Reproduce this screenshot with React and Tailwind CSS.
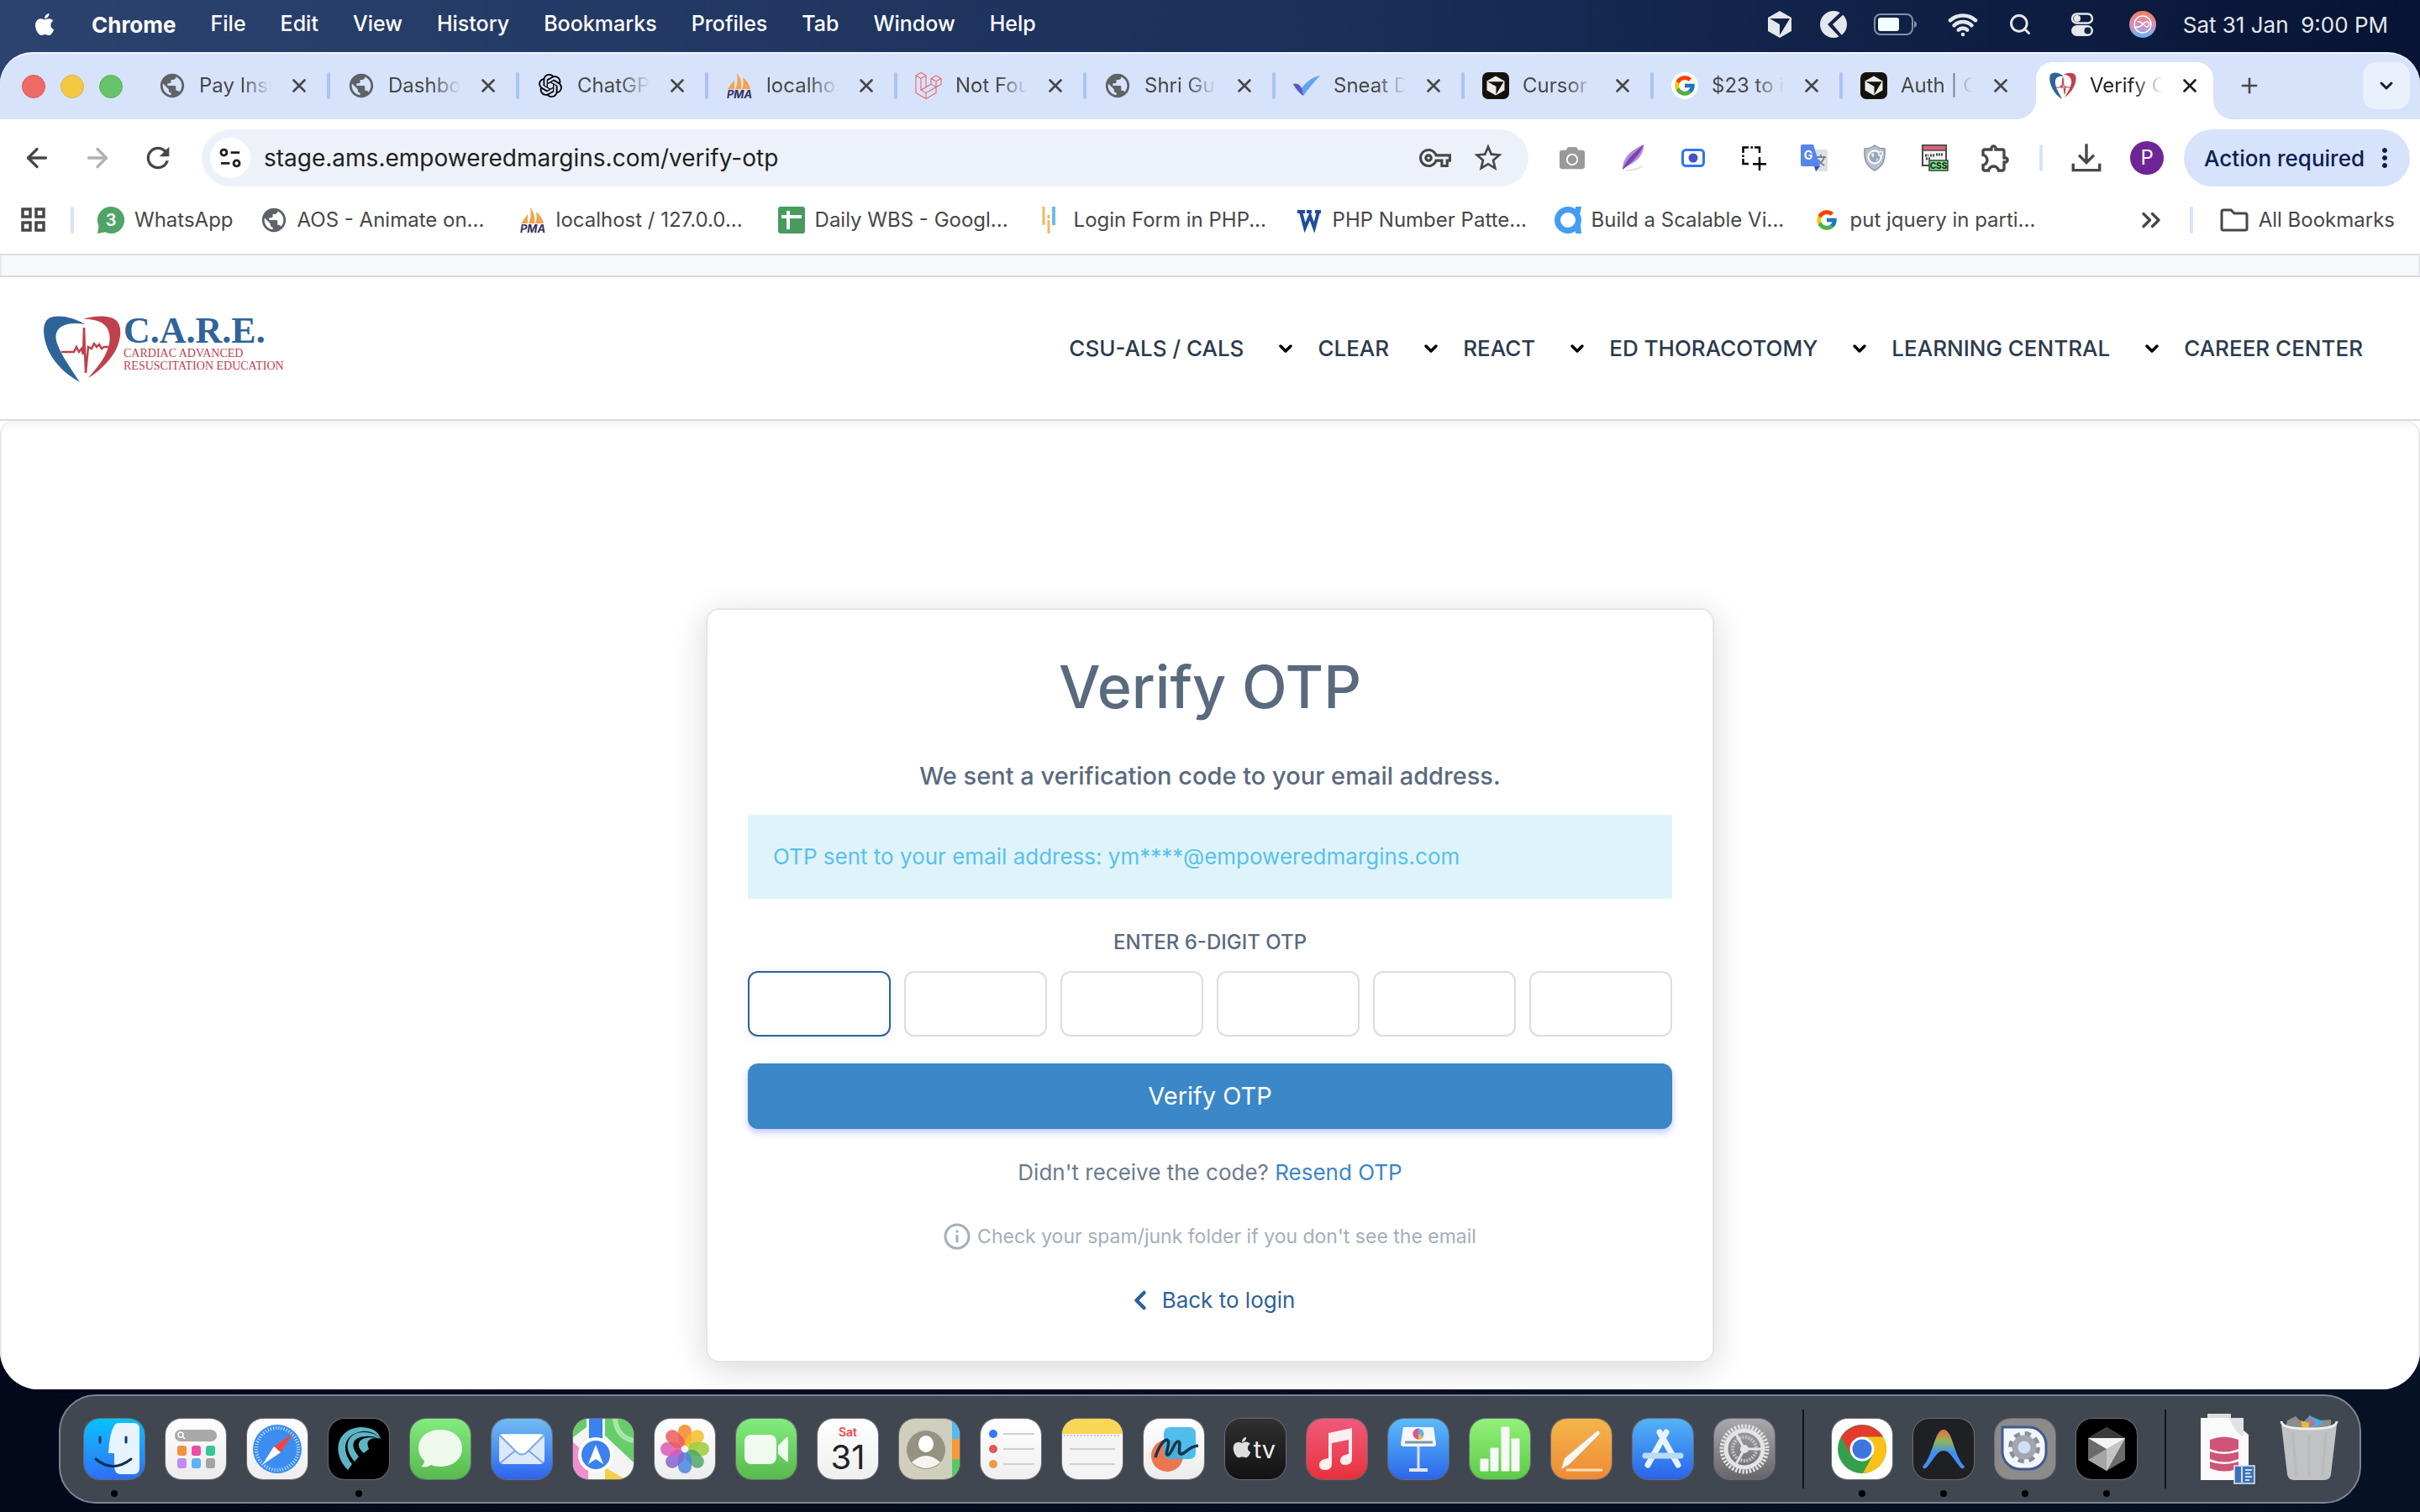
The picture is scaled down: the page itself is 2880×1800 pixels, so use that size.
import React, { useState } from 'react';
import { Plus, X, ChevronDown, ChevronLeft, ChevronsRight, ArrowLeft, ArrowRight, Wifi, Search } from 'lucide-react';
import { FaApple, FaCamera } from 'react-icons/fa';
import { FcGoogle } from 'react-icons/fc';
import { SiOpenai, SiLaravel } from 'react-icons/si';
import { MdPublic, MdOutlineVpnKey, MdStarBorder, MdRefresh, MdOutlineExtension, MdMoreVert } from 'react-icons/md';

/* ---------- small brand marks ---------- */

const Globe = () => <MdPublic className="size-[34px] shrink-0 text-[#5f6368]" />;

const Pma = () => (
    <svg viewBox="0 0 32 32" className="size-8">
        <path d="M2 20 10 9v11zM11 20C14 14 14 8 13 1c5 6 6 13 5 19zM19 20c2-5 2-9 1-14 5 4 8 9 9 14z" fill="#f3a34b" />
        <text x="16" y="31" textAnchor="middle" fontSize="13" fontWeight="700" fontStyle="italic" fontFamily="Inter, sans-serif" fill="#33305e">PMA</text>
    </svg>
);

const Sneat = () => (
    <svg viewBox="0 0 32 32" className="size-8">
        <path d="M0 14c5-1 8 1 10 5C15 12 22 6 32 4 24 12 18 20 12 28 8 25 3 20 0 14z" fill="#62a0f2" />
        <path d="M0 14c5-1 8 1 10 5l2 9C8 25 3 20 0 14z" fill="#5a55c8" />
    </svg>
);

const Cube = ({ box = '#14120b', face = '#edecec', className = 'size-8' }) => (
    <svg viewBox="0 0 32 32" className={className}>
        <rect width="32" height="32" rx="7" fill={box} />
        <path d="M16 4.500 26.500 10.500V21.500L16 27.500 5.500 21.500V10.500z" fill={face} />
        <path d="M6.500 11.300H25.500L16.500 26.500V17z" fill={box} />
    </svg>
);

const GoogleDot = () => (
    <span className="flex size-8 items-center justify-center rounded-full bg-white"><FcGoogle className="size-7" /></span>
);

const Heart = ({ className }) => (
    <svg viewBox="0 0 92 80" className={className}>
        <path d="M49 11C34 2 16-1 6 4-3 10-1 29 7 45c8 15 20 26 36 35C34 66 22 50 16 34 10 17 22 7 49 11z" fill="#2f6499" />
        <path d="M47 5C60 0 80 0 87 7c7 8 5 24-3 38-8 12-18 22-31 30 10-12 20-23 24-37C82 20 76 4 47 5z" fill="#c0414e" />
        <path d="M21 44h15l3-6 3 6 3-4 2 7 1-32 2 54 3-31 4 2 3-6 3 4 3-3 3 5 3-2h5" fill="none" stroke="#c0414e" strokeWidth="2.500" />
    </svg>
);

/* browser tab version: taller than the header logo */
const HeartTab = () => (
    <svg viewBox="0 0 32 32" className="size-8">
        <path d="M17 5C12 0 4-1 1 3c-2 5 0 13 4 19 3 5 7 8 10 10-2-5-7-12-8-18C6 7 10 4 17 5z" fill="#2f6499" />
        <path d="M17 3c5-3 12-3 14 1 2 5-1 12-4 17-3 4-6 7-9 9 3-5 7-11 8-17 1-6-3-10-9-10z" fill="#c0414e" />
        <path d="M8 18h5l1-2 1 3 1-13 2 20 1-9 2 1h4" fill="none" stroke="#c0414e" strokeWidth="1.200" />
    </svg>
);

const SheetMark = () => (
    <svg viewBox="0 0 32 32" className="size-8">
        <rect width="32" height="32" rx="3" fill="#479b5f" />
        <path d="M12 5v22M4 12h24" stroke="#fff" strokeWidth="4" />
    </svg>
);

const WhatsMark = () => (
    <svg viewBox="0 0 32 32" className="size-8">
        <path d="M16 0a16 16 0 1 1-7 30.300L0 32l1.500-9A16 16 0 0 1 16 0z" fill="#4fa467" />
        <text x="16" y="23" textAnchor="middle" fontSize="20" fontWeight="600" fontFamily="Inter, sans-serif" fill="#fff">3</text>
    </svg>
);

const FormMark = () => (
    <svg viewBox="0 0 32 32" className="size-8">
        <path d="M8 0v22M14 10v4M14 16v16" stroke="#f2b661" strokeWidth="3" />
        <path d="M20 0v22" stroke="#6bbbe8" strokeWidth="4" />
    </svg>
);

const WMark = () => (
    <svg viewBox="0 0 32 32" className="size-8">
        <path d="M2 6h9M13 6h6M23 6h7M6 6l5 19 6-14 5 14 5-19" fill="none" stroke="#1f4c9d" strokeWidth="4" />
    </svg>
);

const AMark = () => (
    <svg viewBox="0 0 32 32" className="size-8">
        <circle cx="16" cy="16" r="12.500" fill="none" stroke="#449df3" strokeWidth="7" />
        <path d="M25 0h7l-2 10 2 22h-7z" fill="#449df3" />
    </svg>
);

/* ---------- menu bar ---------- */

const menus = ['File', 'Edit', 'View', 'History', 'Bookmarks', 'Profiles', 'Tab', 'Window', 'Help'];

const CursorTray = () => (
    <svg viewBox="0 0 28 32" className="h-8 w-7">
        <path d="M14 0 28 8v16l-14 8L0 24V8z" fill="#e4e7ec" />
        <path d="M2 9h24L14 29V16z" fill="#122346" />
    </svg>
);

const KiteTray = () => (
    <svg viewBox="0 0 32 32" className="size-8">
        <circle cx="16" cy="16" r="16" fill="#e4e7ec" />
        <path d="M25 1 9 16l14 15 3-2-11-13L28 4z" fill="#122346" />
        <path d="M28 6v20l-9-10z" fill="#e4e7ec" />
    </svg>
);

const Battery = () => (
    <svg viewBox="0 0 52 26" className="h-[26px] w-[52px]">
        <rect x="1" y="1" width="45" height="24" rx="7" fill="none" stroke="#8290aa" strokeWidth="2" />
        <rect x="5" y="5" width="25" height="16" rx="3" fill="#f1fffd" />
        <path d="M48 9c4 1 4 7 0 8z" fill="#8290aa" />
    </svg>
);

const ControlCentre = () => (
    <svg viewBox="0 0 28 28" className="size-7">
        <rect x="2" y="1.500" width="24" height="11" rx="5.500" fill="none" stroke="#e4e7ec" strokeWidth="2.500" />
        <circle cx="8" cy="7" r="4" fill="#e4e7ec" />
        <rect x="1" y="15" width="26" height="13" rx="6.500" fill="#e4e7ec" />
        <circle cx="20.500" cy="21.500" r="4" fill="#122346" />
    </svg>
);

const SiriMark = () => (
    <span className="flex size-8 items-center justify-center rounded-full bg-linear-to-b from-[#f0824d] via-[#d98bb5] to-[#4db4f5]">
        <svg viewBox="0 0 24 24" className="size-6" fill="none" stroke="#fff" strokeWidth="1.500">
            <circle cx="12" cy="12" r="10" />
            <path d="M3 15c4 2 7-1 9-3s5-5 7-2-1 6-4 4-5-7-9-5" />
        </svg>
    </span>
);

function MenuBar() {
    return (
        <header className="flex h-[62px] items-center justify-between pr-[38px] pb-1 pl-[38px] text-[25px] font-medium text-white">
            <nav className="flex items-center gap-[41px]">
                <FaApple className="size-[30px]" />
                <button className="text-[26px] font-bold">Chrome</button>
                {menus.map(m => <button key={m}>{m}</button>)}
            </nav>
            <div className="flex items-center text-[#e4e7ec]">
                <CursorTray />
                <span className="ml-[34px] flex"><KiteTray /></span>
                <span className="ml-8 flex"><Battery /></span>
                <Wifi className="ml-9 size-9" strokeWidth={3} />
                <Search className="ml-9 size-7" strokeWidth={2.500} />
                <span className="ml-[46px] flex"><ControlCentre /></span>
                <span className="mr-8 ml-[42px] flex"><SiriMark /></span>
                <time className="text-[26px] font-normal whitespace-pre">Sat 31 Jan  9:00 PM</time>
            </div>
        </header>
    );
}

/* ---------- chrome: tabs, toolbar, bookmarks ---------- */

const tabs = [
    { title: 'Pay Inst', icon: <Globe /> },
    { title: 'Dashbo', icon: <Globe /> },
    { title: 'ChatGP', icon: <SiOpenai className="size-7 text-black" /> },
    { title: 'localhos', icon: <Pma /> },
    { title: 'Not Fou', icon: <SiLaravel className="size-8 text-[#ea5f55]" /> },
    { title: 'Shri Gu', icon: <Globe /> },
    { title: 'Sneat D', icon: <Sneat /> },
    { title: 'Cursor', icon: <Cube /> },
    { title: '$23 to i', icon: <GoogleDot /> },
    { title: 'Auth | C', icon: <Cube /> },
    { title: 'Verify O', icon: <HeartTab />, active: true },
];

const bookmarks = [
    { title: 'AOS - Animate on...', icon: <Globe /> },
    { title: 'localhost / 127.0.0...', icon: <Pma /> },
    { title: 'Daily WBS - Googl...', icon: <SheetMark /> },
    { title: 'Login Form in PHP...', icon: <FormMark /> },
    { title: 'PHP Number Patte...', icon: <WMark /> },
    { title: 'Build a Scalable Vi...', icon: <AMark /> },
    { title: 'put jquery in parti...', icon: <FcGoogle className="size-7" /> },
];

function Tab({ tab, divider }) {
    return (
        <div className={`relative flex h-[68px] w-[225px] min-w-0 items-center pb-3 pl-[21px] ${tab.active ? 'text-[#1f1f1f]' : 'text-[#474747]'}`}>
            {tab.active && (
                <svg viewBox="0 0 259 68" className="absolute -left-[19px] bottom-0 h-[68px] w-[259px]" fill="#fff">
                    <path d="M0 68c14 0 24-10 24-24V20C24 9 33 0 44 0h171c11 0 20 9 20 20v24c0 14 10 24 24 24z" />
                </svg>
            )}
            <span className="relative flex w-8 shrink-0 justify-center">{tab.icon}</span>
            <button className="relative ml-4 w-[86px] overflow-hidden text-left text-2xl whitespace-nowrap [mask-image:linear-gradient(to_right,#000_60%,transparent_100%)]">
                {tab.title}
            </button>
            <button aria-label="Close tab" className="relative ml-5"><X className="size-[26px]" strokeWidth={2.500} /></button>
            {divider && <span className="ml-auto h-8 w-1 rounded-full bg-[#a9c4f5]" />}
        </div>
    );
}

function TabStrip() {
    return (
        <div className="flex h-[78px] items-end bg-[#d7e2fb] pr-3 pl-[26px]">
            <div className="flex h-[68px] items-center gap-[18px] pb-[10px]">
                <button aria-label="Close" className="size-7 rounded-full border border-[#dd5550] bg-[#ee6a66]" />
                <button aria-label="Minimise" className="size-7 rounded-full border border-[#dfb33c] bg-[#f3c944]" />
                <button aria-label="Zoom" className="size-7 rounded-full border border-[#54b557] bg-[#66c368]" />
            </div>
            <div className="ml-[22px] flex min-w-0">
                {tabs.map((t, i) => <Tab key={i} tab={t} divider={i < 9} />)}
            </div>
            <button aria-label="New tab" className="mb-[26px] ml-5 text-[#474747]"><Plus className="size-7" strokeWidth={2.200} /></button>
            <button aria-label="Search tabs" className="mb-3 ml-auto flex size-14 items-center justify-center rounded-2xl bg-[#ebf1fc] text-[#1f1f1f]">
                <ChevronDown className="size-6" strokeWidth={3} />
            </button>
        </div>
    );
}

const extensions = [
    { name: 'Screenshot', icon: <FaCamera className="size-[30px] text-[#999]" /> },
    {
        name: 'Quill', icon: (
            <svg viewBox="0 0 32 32" className="size-8">
                <path d="M4 30C4 14 16 6 29 0 30 12 20 22 8 26z" fill="#b58bd8" />
                <path d="M4 30C8 18 18 10 29 0 24 14 14 22 4 30z" fill="#7c43b3" />
                <path d="M6 31c8-1 16-2 24-7-6 6-16 8-24 7z" fill="#ccc" />
            </svg>
        ),
    },
    {
        name: 'Recorder', icon: (
            <svg viewBox="0 0 32 32" className="size-8">
                <rect x="3.500" y="6.500" width="25" height="19" rx="4" fill="#fff" stroke="#2f74f5" strokeWidth="3" />
                <circle cx="16" cy="16" r="5.500" fill="#4451c9" />
            </svg>
        ),
    },
    {
        name: 'Capture area', icon: (
            <svg viewBox="0 0 32 32" className="size-8" fill="none" stroke="#000" strokeWidth="2.500">
                <path d="M3.500 10V3.500H10M17 3.500h6V10M3.500 17v6H10M12.500 3.500h2.500M3.500 12.500V15M23 15v16M15 23.200h16" />
            </svg>
        ),
    },
    {
        name: 'Translate', icon: (
            <svg viewBox="0 0 32 32" className="size-8">
                <path d="M10 6h20a2 2 0 0 1 2 2v22a2 2 0 0 1-2 2H18z" fill="#dfe0e2" />
                <path d="M19 15h11M24 12v3M28 15c-1 5-4 7-8 9M21 18c1 3 4 5 7 7" fill="none" stroke="#6b8796" strokeWidth="1.800" />
                <path d="M2 0h13l8 26H2a2 2 0 0 1-2-2V2a2 2 0 0 1 2-2z" fill="#5686ec" />
                <path d="M16 26h7l-5 6z" fill="#3b52c0" />
                <text x="9" y="18" textAnchor="middle" fontSize="14" fontWeight="700" fontFamily="Inter, sans-serif" fill="#fff">G</text>
            </svg>
        ),
    },
    {
        name: 'Shield', icon: (
            <svg viewBox="0 0 32 32" className="size-8">
                <path d="M16 1c4 3 8 4 12 4 1 13-2 21-12 26C6 26 3 18 4 5c4 0 8-1 12-4z" fill="#b8c0d0" stroke="#8e96a8" strokeWidth="1.500" />
                <circle cx="16" cy="15" r="7.500" fill="#9aa5bc" stroke="#fff" strokeWidth="2" />
                <path d="M12 11c3-2 4 0 3 3s-3 1-3-3zM18 17c2-1 3 1 0 3z" fill="#e6e9ef" />
                <circle cx="23" cy="11" r="2.500" fill="#b8c0d0" stroke="#fff" strokeWidth="1.200" />
            </svg>
        ),
    },
    {
        name: 'CSS viewer', icon: (
            <svg viewBox="0 0 32 32" className="size-8">
                <rect x="1" y="1" width="28" height="24" fill="#f4f4f4" stroke="#4a4a4a" strokeWidth="2" />
                <rect x="1" y="1" width="28" height="6" fill="#e0607c" stroke="#4a4a4a" strokeWidth="1.500" />
                <path d="M4 13h4M10 13h5M17 12h9M5 17h6" stroke="#444" strokeWidth="3" strokeDasharray="2 1" />
                <rect x="9" y="19" width="22" height="12" fill="#86e08c" stroke="#2d4a2f" strokeWidth="1.500" />
                <text x="20" y="29" textAnchor="middle" fontSize="10" fontWeight="800" fontFamily="Inter, sans-serif" fill="#163018">CSS</text>
            </svg>
        ),
    },
    { name: 'Extensions', icon: <MdOutlineExtension className="size-10 text-[#474747]" /> },
];

function Toolbar() {
    return (
        <div className="flex h-20 items-center bg-white pt-3 pr-3 pl-4 text-[#474747]">
            <div className="flex gap-4">
                <button aria-label="Back" className="flex size-14 items-center justify-center"><ArrowLeft className="size-9" strokeWidth={2.200} /></button>
                <button aria-label="Forward" className="flex size-14 items-center justify-center text-[#b0b0b0]"><ArrowRight className="size-9" strokeWidth={2.200} /></button>
                <button aria-label="Reload" className="flex size-14 items-center justify-center"><MdRefresh className="size-10" /></button>
            </div>
            <div className="ml-6 flex h-[68px] min-w-0 flex-1 items-center rounded-full bg-[#edf2fa] pr-7 pl-[10px]">
                <button aria-label="Site information" className="flex size-12 items-center justify-center rounded-full bg-white">
                    <svg viewBox="0 0 24 24" className="size-7" fill="none" stroke="#1f1f1f" strokeWidth="2.400">
                        <circle cx="5.500" cy="6.500" r="3" /><path d="M12.500 6.500h9M2.500 17.500h9" /><circle cx="18.500" cy="17.500" r="3" />
                    </svg>
                </button>
                <input aria-label="Address" className="ml-4 min-w-0 flex-1 bg-transparent text-[28px] text-[#1f1f1f] outline-none" defaultValue="stage.ams.empoweredmargins.com/verify-otp" />
                <button aria-label="Passwords"><MdOutlineVpnKey className="size-[38px]" /></button>
                <button aria-label="Bookmark this page" className="ml-6"><MdStarBorder className="size-10" /></button>
            </div>
            <div className="ml-8 flex items-center gap-8">
                {extensions.map(e => (
                    <button key={e.name} aria-label={e.name} className="flex size-10 items-center justify-center">{e.icon}</button>
                ))}
                <span className="h-8 w-1 rounded-full bg-[#d7e2fb]" />
                <button aria-label="Downloads" className="flex size-10 items-center justify-center">
                    <svg viewBox="0 0 32 32" className="size-9" fill="none" stroke="currentColor" strokeWidth="3">
                        <path d="M16 1v20M8 13l8 8 8-8M2 22v7h28v-7" />
                    </svg>
                </button>
                <button aria-label="Profile" className="flex size-10 items-center justify-center rounded-full bg-[#6f2596] text-2xl text-white">P</button>
            </div>
            <button className="ml-6 flex h-[68px] items-center rounded-full bg-[#d7e2fb] pr-3 pl-6 text-[26px] font-medium whitespace-nowrap text-[#0b1f52]">
                Action required
                <MdMoreVert className="ml-[6px] size-9" />
            </button>
        </div>
    );
}

function BookmarkBar() {
    return (
        <div className="flex h-[82px] items-center border-b-2 border-[#dfe0e2] bg-white pr-[30px] pl-6 text-2xl whitespace-nowrap text-[#474747]">
            <button aria-label="Apps">
                <svg viewBox="0 0 32 32" className="size-8" fill="none" stroke="currentColor" strokeWidth="3.500">
                    <path d="M3 3h9v9H3zM19 3h9v9h-9zM3 19h9v9H3zM19 19h9v9h-9z" />
                </svg>
            </button>
            <span className="ml-7 h-8 w-1 rounded-full bg-[#d7e2fb]" />
            <a href="#whatsapp" className="ml-7 flex items-center gap-3"><WhatsMark />WhatsApp</a>
            <div className="ml-8 flex">
                {bookmarks.map(b => (
                    <a key={b.title} href="#bookmark" className="flex w-[308px] items-center gap-3">
                        <span className="flex w-8 justify-center">{b.icon}</span>{b.title}
                    </a>
                ))}
            </div>
            <button aria-label="More bookmarks" className="ml-auto"><ChevronsRight className="size-9" strokeWidth={2.200} /></button>
            <span className="ml-7 h-8 w-1 rounded-full bg-[#d7e2fb]" />
            <button className="ml-8 flex items-center gap-3">
                <svg viewBox="0 0 34 28" className="h-7 w-[34px]" fill="none" stroke="currentColor" strokeWidth="3">
                    <path d="M2 4a2 2 0 0 1 2-2h9l4 4h13a2 2 0 0 1 2 2v16a2 2 0 0 1-2 2H4a2 2 0 0 1-2-2z" />
                </svg>
                All Bookmarks
            </button>
        </div>
    );
}

/* ---------- site ---------- */

const navItems = ['CSU-ALS / CALS', 'CLEAR', 'REACT', 'ED THORACOTOMY', 'LEARNING CENTRAL', 'CAREER CENTER'];

function SiteHeader() {
    return (
        <>
            <div className="h-6 border-x-2 border-[#e6e8ec] bg-[#f7f8fa]" />
            <div className="flex h-[173px] items-center justify-between border-y-2 border-[#d8dae1] bg-white pr-[68px] pl-[52px]">
                <a href="#home" className="flex items-start gap-[3px] font-['Liberation_Serif',serif]">
                    <Heart className="h-20 w-[92px]" />
                    <span className="flex flex-col text-sm leading-[15px] text-[#c0414e]">
                        <span className="text-[44px] leading-[38px] font-bold text-[#2f6499]">C.A.R.E.</span>
                        <span>CARDIAC ADVANCED</span>
                        <span>RESUSCITATION EDUCATION</span>
                    </span>
                </a>
                <nav className="flex items-center gap-[26px] text-[26px] font-medium text-[#2b3a4e]">
                    {navItems.map((item, i) => (
                        <div key={item} className="flex items-center gap-[38px]">
                            <a href="#nav">{item}</a>
                            {i < navItems.length - 1 && <ChevronDown className="size-6 text-black" strokeWidth={3.500} />}
                        </div>
                    ))}
                </nav>
            </div>
        </>
    );
}

function OtpCard() {
    const [otp, setOtp] = useState(['', '', '', '', '', '']);
    const [active, setActive] = useState(0);

    const update = (index, value) => {
        setOtp(otp.map((d, i) => (i === index ? value.slice(-1) : d)));
    };

    return (
        <form
            onSubmit={(e) => e.preventDefault()}
            className="flex w-[1200px] max-w-full flex-col items-center rounded-2xl border-2 border-[#e4e5ea] bg-white px-12 pt-12 pb-[52px] text-[#5a6a7e] shadow-[0_8px_40px_rgba(0,0,0,0.16)]"
        >
            <h1 className="text-[70px] leading-[88px] font-medium">Verify OTP</h1>
            <p className="mt-10 text-[29px] leading-[44px] font-medium">We sent a verification code to your email address.</p>
            <div className="mt-6 w-full bg-[#def4fa] px-[30px] py-8 text-[26px] leading-9 text-[#5bc0ea]">
                OTP sent to your email address: ym****@empoweredmargins.com
            </div>
            <label htmlFor="otp-0" className="mt-9 text-2xl leading-8 font-medium">ENTER 6-DIGIT OTP</label>
            <div className="mt-[18px] flex w-full gap-4">
                {otp.map((digit, i) => (
                    <input
                        key={i}
                        id={`otp-${i}`}
                        aria-label={`Digit ${i + 1}`}
                        inputMode="numeric"
                        value={digit}
                        onFocus={() => setActive(i)}
                        onChange={(e) => update(i, e.target.value)}
                        className={`h-[78px] min-w-0 flex-1 rounded-xl border-2 text-center text-3xl outline-none ${active === i ? 'border-[#2c6298] shadow-[0_2px_12px_rgba(105,108,255,0.12)]' : 'border-[#dadde3]'}`}
                    />
                ))}
            </div>
            <button className="mt-8 h-[78px] w-full rounded-xl bg-[#3b87c8] text-[29px] text-white shadow-[0_4px_8px_rgba(105,108,255,0.4)]">
                Verify OTP
            </button>
            <p className="mt-8 text-[26px] leading-10 text-[#6b7a8e]">
                Didn't receive the code? <a href="#resend" className="text-[#3b87c8]">Resend OTP</a>
            </p>
            <p className="mt-10 flex items-center gap-2 text-[23px] leading-8 text-[#a4aebb]">
                <svg viewBox="0 0 32 32" className="size-8" fill="none" stroke="currentColor" strokeWidth="3">
                    <circle cx="16" cy="16" r="14" /><path d="M16 14v9M16 8.500v3" />
                </svg>
                Check your spam/junk folder if you don't see the email
            </p>
            <a href="#login" className="mt-10 flex items-center gap-2 text-[26px] leading-10 text-[#2c6298]">
                <ChevronLeft className="size-9" strokeWidth={3} />
                Back to login
            </a>
        </form>
    );
}

/* ---------- dock ---------- */

const petals = ['#f58a24', '#f4bc2c', '#9ccb3b', '#4fa865', '#4a86e0', '#8a63cf', '#d95ab5', '#ee5a5a'];

const dockApps = [
    {
        name: 'Finder', bg: 'bg-linear-to-b from-[#04c2ff] to-[#2f6cf6]', open: true, art: (
            <>
                <path d="M41 5h18q7 0 7 8v45q0 8-7 8H44q-8 0-8-10V41h-7Q30 18 36 8q2-3 5-3z" fill="#e6f4ff" />
                <path d="M19 22v6M50 22v6" stroke="#10375f" strokeWidth="3" strokeLinecap="round" />
                <path d="M14 48q20 17 42 0" fill="none" stroke="#10304f" strokeWidth="3" strokeLinecap="round" />
            </>
        ),
    },
    {
        name: 'Launchpad', bg: 'bg-linear-to-b from-white to-[#ebebeb]', art: (
            <>
                <rect x="11" y="13" width="50" height="14" rx="7" fill="#a9a9a9" />
                <circle cx="18" cy="19" r="3" fill="none" stroke="#fff" strokeWidth="1.500" /><path d="m20 21 3 3" stroke="#fff" strokeWidth="1.500" />
                {['#f2913d', '#ec4fa0', '#35c596', '#c18bf5', '#62b1f7', '#a3a3a3'].map((c, i) => (
                    <rect key={c} x={14 + (i % 3) * 17} y={i < 3 ? 32 : 47} width="11" height="12" rx="3" fill={c} />
                ))}
            </>
        ),
    },
    {
        name: 'Safari', bg: 'bg-linear-to-b from-white to-[#eee]', art: (
            <>
                <circle cx="36" cy="36" r="29" fill="#3b8ef0" />
                <circle cx="36" cy="36" r="25" fill="none" stroke="#cfe4fc" strokeWidth="4" strokeDasharray="1 2.200" />
                <path d="M55 17 40 40l-8-7z" fill="#f2443c" /><path d="M18 55l14-22 8 7z" fill="#fff" />
            </>
        ),
    },
    {
        name: 'Warp', bg: 'bg-black', open: true, art: (
            <g fill="#5fb4c4">
                <path d="M23 61C4 42 8 12 38 10q20 0 24 14-8-10-21-9C17 18 15 38 28 54z" />
                <path d="M31 51C16 34 22 16 42 16q14 0 19 8-8-4-17-3C28 22 25 32 36 45z" />
                <path d="M42 41C29 30 38 19 58 23q-16 0-10 13z" />
            </g>
        ),
    },
    {
        name: 'Messages', bg: 'bg-linear-to-b from-[#83ec7d] to-[#58b94f]', art: (
            <path d="M36 13c15 0 26 9 26 22S51 57 36 57q-6 0-11-2-5 3-12 2 4-3 4-7-7-6-7-15c0-13 11-22 26-22z" fill="#eefbec" />
        ),
    },
    {
        name: 'Mail', bg: 'bg-linear-to-b from-[#72bbf1] to-[#2f63ee]', art: (
            <>
                <rect x="9" y="18" width="54" height="36" rx="5" fill="#dce9fb" />
                <path d="M10 19h52L42 40q-6 5-12 0z" fill="#fff" />
                <path d="m10 20 20 20q6 5 12 0l20-20M10 53l18-15M62 53 44 38" fill="none" stroke="#7ea7e8" strokeWidth="2" />
            </>
        ),
    },
    {
        name: 'Maps', bg: 'bg-[#f4f4f2]', art: (
            <>
                <path d="M38 0h34v52L38 20zM0 0h16v10L0 22z" fill="#66cd6a" />
                <path d="M0 28 18 44v28H0z" fill="#ee8fcf" /><path d="M38 58l24 14H38z" fill="#f6cf45" />
                <path d="M19 0h16v30H19z" fill="#3b82f0" />
                <path d="M50 0q2 22 22 26" fill="none" stroke="#a9e5ab" strokeWidth="6" />
                <circle cx="27" cy="43" r="19" fill="#3b82f0" stroke="#fff" strokeWidth="4" />
                <path d="m27 31 9 23-9-6-9 6z" fill="#fff" />
            </>
        ),
    },
    {
        name: 'Photos', bg: 'bg-linear-to-b from-white to-[#ededed]', art: (
            <>
                {petals.map((c, i) => (
                    <rect key={c} x="28" y="7" width="16" height="25" rx="8" fill={c} fillOpacity="0.85" transform={`rotate(${i * 45} 36 36)`} />
                ))}
            </>
        ),
    },
    {
        name: 'FaceTime', bg: 'bg-linear-to-b from-[#83ec7d] to-[#58b94f]', art: (
            <>
                <rect x="10" y="19" width="38" height="35" rx="8" fill="#effbee" />
                <path d="M50 32 60 22q2-1 2 2v25q0 3-2 2L50 42z" fill="#effbee" />
            </>
        ),
    },
    {
        name: 'Calendar', bg: 'bg-linear-to-b from-white to-[#efefef]', art: (
            <>
                <text x="36" y="21" textAnchor="middle" fontSize="14" fontWeight="600" fill="#f04848">Sat</text>
                <text x="36" y="60" textAnchor="middle" fontSize="40" fill="#222">31</text>
            </>
        ),
    },
    {
        name: 'Contacts', bg: 'bg-[#d0cebd]', art: (
            <>
                <path d="M63 0h9v24h-9z" fill="#53b9f2" /><path d="M63 24h9v24h-9z" fill="#f79a35" /><path d="M63 48h9v24h-9z" fill="#58c965" />
                <circle cx="32" cy="37" r="23" fill="#959283" />
                <ellipse cx="32" cy="30" rx="9" ry="10" fill="#fff" /><path d="M15 52q17-16 34 0-17 14-34 0z" fill="#f5f5f0" />
            </>
        ),
    },
    {
        name: 'Reminders', bg: 'bg-linear-to-b from-white to-[#efefef]', art: (
            <>
                <circle cx="15" cy="18" r="5" fill="#3478f6" /><circle cx="15" cy="36" r="5" fill="#e05a50" /><circle cx="15" cy="54" r="5" fill="#f09a45" />
                <path d="M27 18h37M27 36h37M27 54h37" stroke="#cfcfcf" strokeWidth="2" />
            </>
        ),
    },
    {
        name: 'Notes', bg: 'bg-[#f4f4f4]', art: (
            <>
                <path d="M0 0h72v18H0z" fill="#f9d653" /><path d="M2 20h68" stroke="#aaa" strokeWidth="1.500" strokeDasharray="1.500 2.500" />
                <path d="M9 36h54M9 54h54" stroke="#cfcfcf" strokeWidth="2" />
            </>
        ),
    },
    {
        name: 'Freeform', bg: 'bg-linear-to-b from-white to-[#ececec]', art: (
            <>
                <circle cx="28" cy="44" r="19" fill="#ec7650" /><rect x="24" y="10" width="38" height="38" rx="7" fill="#38b5ea" fillOpacity="0.88" />
                <path d="M14 46c4-14 12-24 15-20s-5 18 0 17 7-16 12-16-2 16 4 15 8-9 20-10" fill="none" stroke="#14374c" strokeWidth="3.500" />
            </>
        ),
    },
    {
        name: 'TV', bg: 'bg-linear-to-b from-[#303030] to-[#121212]', art: (
            <>
                <FaApple x="6" y="20" size={28} color="#ddd" />
                <text x="47" y="47" textAnchor="middle" fontSize="29" fill="#eee">tv</text>
            </>
        ),
    },
    {
        name: 'Music', bg: 'bg-linear-to-b from-[#f0597a] to-[#e92f3a]', art: (
            <path d="M26 17 54 11v36q0 8-8 8-6 0-6-5 0-7 10-8V25l-20 4v24q0 8-8 8-7 0-7-6 0-7 11-8z" fill="#fdeef0" />
        ),
    },
    {
        name: 'Keynote', bg: 'bg-linear-to-b from-[#5cbcf8] to-[#2f65ea]', art: (
            <>
                <path d="M18 10h36l3 20q0 3-3 3H18q-3 0-3-3z" fill="#f4f6fa" /><path d="M36 33v27" stroke="#dbe2ee" strokeWidth="3" />
                <path d="M25 59h22v4H25z" fill="#e4e4e8" /><path d="M20 28h33" stroke="#7c97a8" strokeWidth="3" />
                <circle cx="36" cy="18" r="6.500" fill="#58b6e8" /><path d="M36 11.500a6.500 6.500 0 0 0 0 13z" fill="#e45588" /><path d="m36 18 6 4a7 7 0 0 1-6 3z" fill="#f3bd3f" />
            </>
        ),
    },
    {
        name: 'Numbers', bg: 'bg-linear-to-b from-[#93f07a] to-[#5ccb48]', art: (
            <path d="M13 48h9v14h-9zM25 35h9v27h-9zM38 10h9v52h-9zM50 24h9v38h-9z" fill="#f6f9f5" stroke="#f6f9f5" strokeLinejoin="round" />
        ),
    },
    {
        name: 'Pages', bg: 'bg-linear-to-b from-[#f5b54a] to-[#ee8a35]', art: (
            <>
                <path d="M18 61h43" stroke="#fbe0bd" strokeWidth="3" />
                <path d="m12 60 4-13 38-32q4-2 4 3L22 54z" fill="#f9f6f2" stroke="#c9c2b8" strokeWidth="1" />
            </>
        ),
    },
    {
        name: 'App Store', bg: 'bg-linear-to-b from-[#54b3f5] to-[#2d62ea]', art: (
            <g stroke="#e9f3fe" strokeWidth="7" strokeLinecap="round"><path d="M40 16 18 55M32 16l22 39" /><path d="M15 44h42" stroke="#b8dbfb" /></g>
        ),
    },
    {
        name: 'Settings', bg: 'bg-linear-to-b from-[#a9a8ad] to-[#68666b]', art: (
            <>
                <circle cx="36" cy="36" r="27" fill="none" stroke="#e4e4e6" strokeWidth="5" strokeDasharray="2.400 1.840" />
                <circle cx="36" cy="36" r="22" fill="none" stroke="#e4e4e6" strokeWidth="5" />
                <circle cx="36" cy="36" r="14" fill="none" stroke="#c5c5c9" strokeWidth="4" strokeDasharray="2 1.500" />
                <path d="M36 36h21M36 36 26 18M36 36 26 54" stroke="#e4e4e6" strokeWidth="3" /><circle cx="36" cy="36" r="5" fill="#e4e4e6" />
            </>
        ),
    },
];

const runningApps = [
    {
        name: 'Chrome', bg: 'bg-white', open: true, art: (
            <>
                <circle cx="36" cy="36" r="29" fill="#34a04c" />
                <path d="M11 22A29 29 0 0 1 61 21.500H36L23 43z" fill="#e33b2e" />
                <path d="M36 21.500h25A29 29 0 0 1 37 65l12-22z" fill="#fbc116" />
                <circle cx="36" cy="36" r="14.500" fill="#fff" /><circle cx="36" cy="36" r="11.500" fill="#3b76e1" />
            </>
        ),
    },
    {
        name: 'Antigravity', bg: 'bg-[#1f2023]', open: true, art: (
            <>
                <defs>
                    <linearGradient id="arch" x1="0" y1="0" x2="0" y2="1">
                        <stop offset="0" stopColor="#ec6a3c" /><stop offset="0.300" stopColor="#8fb65c" /><stop offset="0.600" stopColor="#3f8df5" /><stop offset="1" stopColor="#4a8bf7" />
                    </linearGradient>
                </defs>
                <path d="M11 57C24 44 25 13 36 13s12 31 25 44q-1 4-5 1c-8-9-12-20-20-20s-12 11-20 20q-4 3-5-1z" fill="url(#arch)" />
            </>
        ),
    },
    {
        name: 'Utility', bg: 'bg-[#8c8b89]', open: true, art: (
            <>
                <path d="M9 10h32a21 21 0 0 1 20 20v10a20 20 0 0 1-20 20H30A21 21 0 0 1 9 40z" fill="#f2f5fb" stroke="#3e5a92" strokeWidth="3" />
                <circle cx="35" cy="34" r="16" fill="none" stroke="#8a8f99" strokeWidth="6" strokeDasharray="7 5.600" />
                <circle cx="35" cy="34" r="11" fill="#cfe0f6" stroke="#a2a6ae" strokeWidth="7" />
            </>
        ),
    },
    {
        name: 'Cursor', bg: 'bg-black', open: true, art: (
            <>
                <path d="M36 10 58 23v26L36 62 14 49V23z" fill="#6b6b6b" />
                <path d="M36 10 58 23H14z" fill="#3c3c3c" /><path d="M14 23h44L36 62V36z" fill="#f4f4f4" /><path d="m36 36 22-13-22 39z" fill="#c4c4c4" />
                <path d="M14 49l22-13v26z" fill="#a5a5a5" />
            </>
        ),
    },
];

function DockIcon({ app }) {
    return (
        <button aria-label={app.name} className="relative">
            <span className={`block size-[72px] overflow-hidden rounded-[19px] ring-1 ring-white/20 ${app.bg}`}>
                <svg viewBox="0 0 72 72" className="size-full" fontFamily="Inter, sans-serif">{app.art}</svg>
            </span>
            {app.open && <span className="absolute top-[85px] left-8 size-2 rounded-full bg-black" />}
        </button>
    );
}

function Dock() {
    return (
        <footer className="mx-auto mt-[6px] mb-[10px] flex h-[130px] items-center gap-[25px] rounded-[44px] border-2 border-[#7b8594] bg-[#414750] pr-6 pl-7">
            {dockApps.map(a => <DockIcon key={a.name} app={a} />)}
            <span className="mx-2 h-[94px] w-[2px] bg-[#10151e]" />
            {runningApps.map(a => <DockIcon key={a.name} app={a} />)}
            <span className="mr-3 ml-2 h-[94px] w-[2px] bg-[#10151e]" />
            <button aria-label="Database file">
                <svg viewBox="0 0 72 84" className="h-[84px] w-[72px]">
                    <path d="M12 0h28v8H12z" fill="#ddd" /><path d="M4 5h34l23 20v54H4z" fill="#fbfbfb" />
                    <path d="M38 5h17v22q-9-2-17-22z" fill="#e2e2e2" />
                    <path d="M15 31q17-7 34 0v11q-17 7-34 0zM15 45q17 6 34 0v9q-17 7-34 0zM15 57q17 6 34 0v8q-17 7-34 0z" fill="#cf5478" />
                    <rect x="44" y="62" width="24" height="21" fill="#3f72b5" stroke="#dfe8f4" strokeWidth="1.500" />
                    <path d="M53 63v19M57 67h8M57 71h6M57 75h8M57 79h5" stroke="#fff" strokeWidth="1.500" />
                </svg>
            </button>
            <button aria-label="Bin">
                <svg viewBox="0 0 72 84" className="h-[84px] w-[72px]">
                    <path d="M10 8l10-5 8 8 8-8 12 5 14-1v10H8z" fill="#8d8d8d" /><path d="m36 2 18 8-16 8z" fill="#3fb0e8" /><path d="M26 8l10 3v7h-8z" fill="#e6b93a" /><path d="m38 4 6 8-6 4z" fill="#ea5f72" />
                    <path d="M3 13q33 8 66 0l-7 59q-1 7-8 7H18q-7 0-8-7z" fill="#c1c2c4" />
                    <path d="M3 9q0 9 33 9t33-9" fill="none" stroke="#eee" strokeWidth="3" />
                    <path d="M16 22l5 52M36 24v50M56 22l-4 52" stroke="#b9babc" strokeWidth="3" />
                </svg>
            </button>
        </footer>
    );
}

export default function App() {
    return (
        <div className="flex min-h-screen flex-col bg-linear-to-r from-[#03091a] to-[#071226] font-[Inter,sans-serif]">
            <div className="bg-linear-to-r from-[#2c436f] via-[#1a2f5a] via-55% to-[#071434]">
                <MenuBar />
            </div>
            <div className="flex flex-1 flex-col bg-[linear-gradient(to_right,#2c436f,#071434)] bg-[length:100%_80px] bg-no-repeat">
                <div className="flex flex-1 flex-col overflow-hidden rounded-t-[38px] rounded-b-[46px] border-t-2 border-[#f0f4fd] bg-white">
                    <TabStrip />
                    <Toolbar />
                    <BookmarkBar />
                    <SiteHeader />
                    <main className="flex flex-1 items-end justify-center rounded-t-2xl border-x-2 border-[#e6e8ec] bg-linear-to-b from-[#f3f4f7] to-white to-[12px] px-4 pb-8">
                        <OtpCard />
                    </main>
                </div>
            </div>
            <Dock />
        </div>
    );
}
